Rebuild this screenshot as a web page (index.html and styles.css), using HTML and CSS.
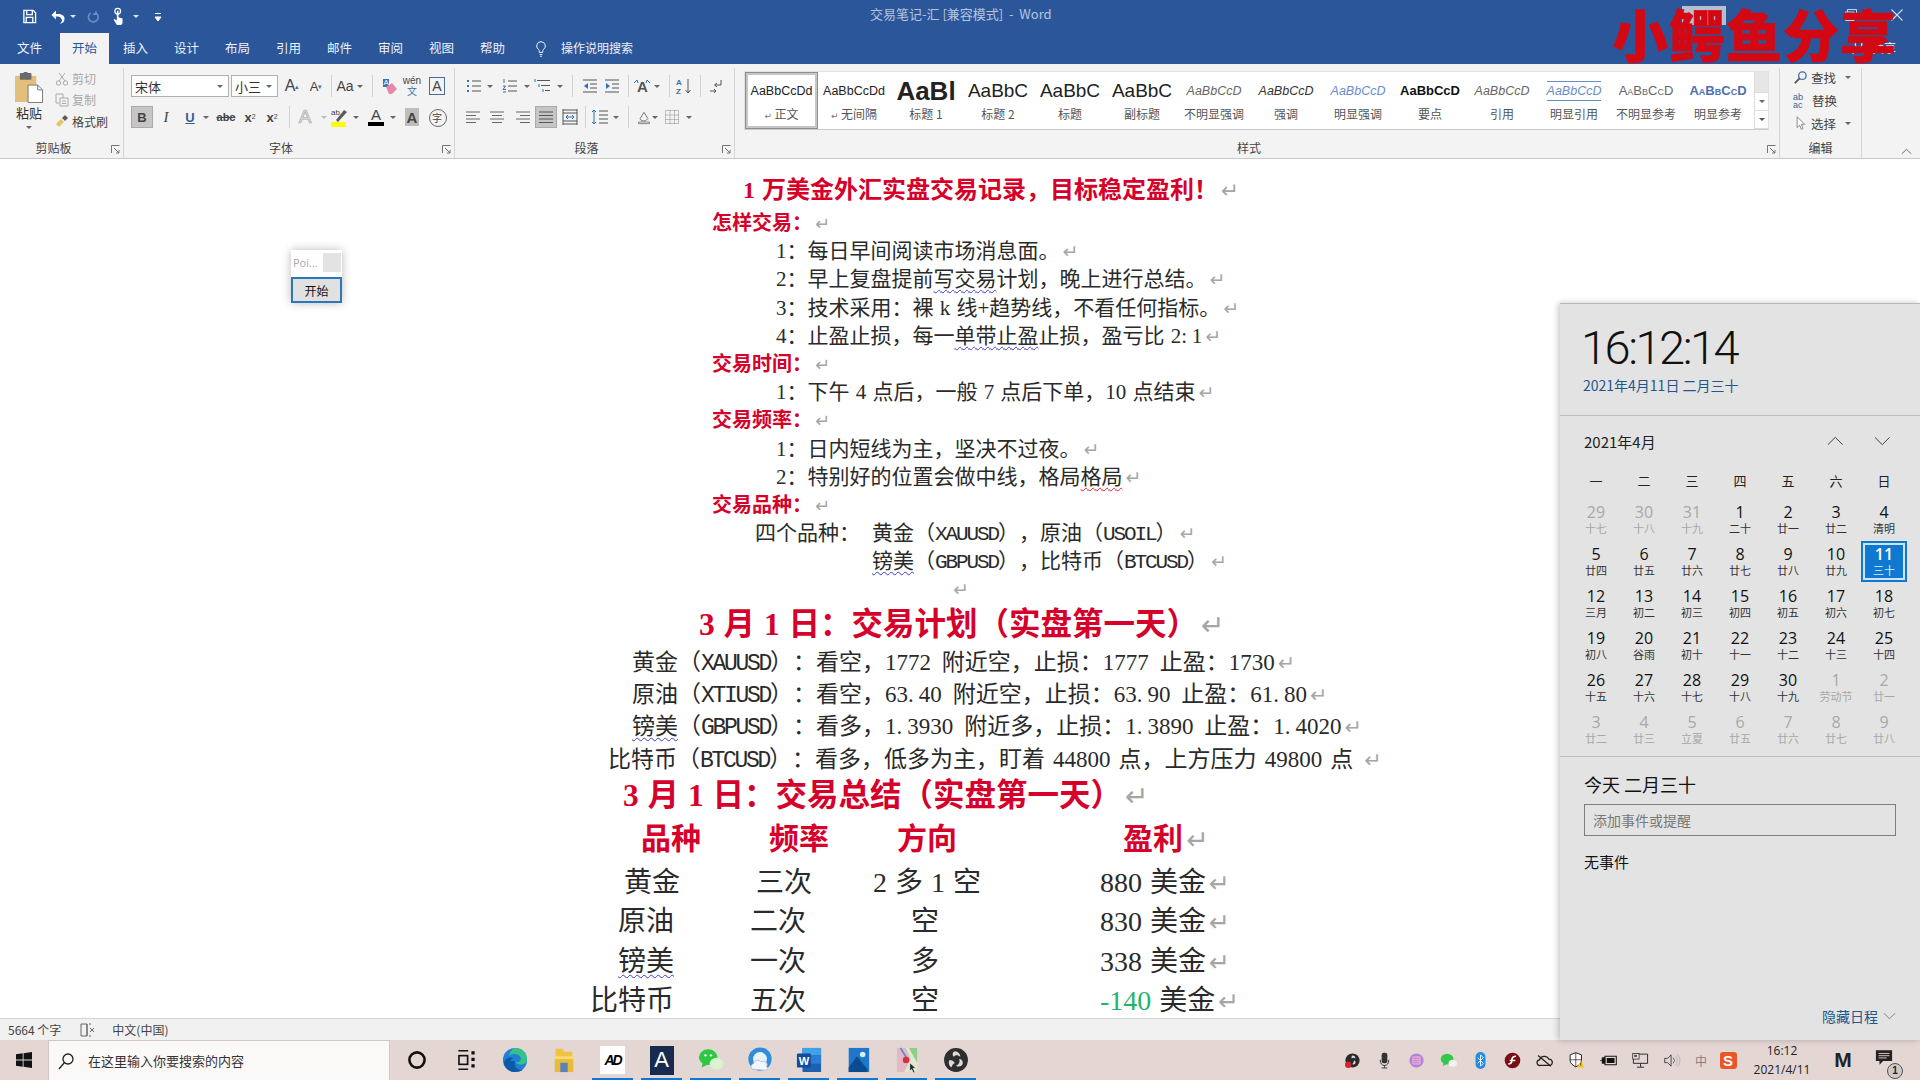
FILE: index.html
```html
<!DOCTYPE html>
<html lang="zh-CN">
<head>
<meta charset="utf-8">
<title>交易笔记-汇 [兼容模式] - Word</title>
<link rel="stylesheet" href="styles.css">
</head>
<body>
<div class="app">
  <header class="titlebar">
    <div class="qat">
      <svg class="q save" viewBox="0 0 16 16"><path d="M2 1.5h10l2.500 2.500v10.500h-12.500zM5 1.500v4.500h6v-4.500M4.500 14.500v-5.500h7v5.500" fill="none" stroke="#fff" stroke-width="1.400"/></svg>
      <svg class="q undo" viewBox="0 0 16 16"><path d="M6 1.500L1.500 6 6 10.500V7.500c3-.5 5 .5 6 3.500 0 2-1 3-2.500 3.500 3.500 0 5-2 5-5 0-3.500-3.500-5-8.500-4.500z" fill="#fff"/></svg>
      <i class="tri q-tri-a"></i>
      <svg class="q redo" viewBox="0 0 16 16"><path d="M11 3a6 6 0 1 1-6.500 0M11 1v3.500H7.500" fill="none" stroke="#6f8dbd" stroke-width="2"/></svg>
      <svg class="q touch" viewBox="0 0 16 22"><circle cx="7" cy="4.500" r="3.500" fill="none" stroke="#fff" stroke-width="1.500"/><path d="M6 4h2v8l5 1.500V19l-1.500 2.500H6L2 15l1-1 3 2z" fill="#fff"/></svg>
      <i class="tri q-tri-b"></i>
      <svg class="q cust" viewBox="0 0 8 12"><path d="M1 2.500h6M1 6h6l-3 4z" fill="#fff" stroke="#fff" stroke-width="1"/></svg>
    </div>
    <div class="doc-name">交易笔记-汇 [兼容模式]  -  Word</div>
    <nav class="tabs">
      <span class="tab first">文件</span><span class="tab on">开始</span><span class="tab">插入</span><span class="tab">设计</span><span class="tab">布局</span><span class="tab">引用</span><span class="tab">邮件</span><span class="tab">审阅</span><span class="tab">视图</span><span class="tab">帮助</span>
      <svg class="bulb" viewBox="0 0 14 20"><path d="M7 1.500a5 5 0 0 0-3 9c.8.700 1 1.500 1 3.500h4c0-2 .2-2.800 1-3.500a5 5 0 0 0-3-9zM5.500 16.500h3M6 18.500h2" fill="none" stroke="#fff" stroke-width="1.100"/></svg>
      <span class="tell">操作说明搜索</span>
    </nav>
    <div class="winbtns">
      <i class="min-ghost"></i>
      <svg class="wc restore" viewBox="0 0 12 12"><path d="M2.500 3V.500h9V8H9M.500 3h8.500v8.500H.500z" fill="none" stroke="#c8d3e6"/></svg>
      <svg class="wc close" viewBox="0 0 12 12"><path d="M.500.500l11 11M11.500.500l-11 11" stroke="#d3dcec" stroke-width="1.100"/></svg>
    </div>
    <div class="share"><svg viewBox="0 0 16 16"><path d="M1 15c1-5 3-6 6-7 3 1 5 2 6 7M7 8a3.500 3.500 0 1 0 0-7 3.500 3.500 0 0 0 0 7z" fill="none" stroke="#fff" stroke-width="1.200"/></svg><span>共享</span></div>
    <div class="mark">小鳄鱼分享</div>
  </header>

  <section class="ribbon">
    <div class="grp g-clip">
      <div class="clip-body">
        <div class="paste">
          <svg class="paste-i" viewBox="0 0 30 32"><rect x="0" y="4" width="22" height="27" fill="#e3bf7c"/><rect x="5" y="1" width="12" height="7" rx="1" fill="#6b6b6b"/><rect x="9" y="0" width="4" height="3" fill="#6b6b6b"/><path d="M13.500 13.500h10l5 5v13h-15z" fill="#fff" stroke="#777"/><path d="M23.500 13.500v5h5" fill="none" stroke="#777"/></svg>
          <span class="paste-t">粘贴</span><i class="tri dk"></i>
        </div>
        <div class="clip-list">
          <div class="cl off"><svg viewBox="0 0 14 14"><path d="M4 1l6 8M10 1L4 9" stroke="#aaa" fill="none"/><circle cx="3.500" cy="11" r="2.200" fill="none" stroke="#aaa"/><circle cx="10.500" cy="11" r="2.200" fill="none" stroke="#aaa"/></svg><span>剪切</span></div>
          <div class="cl off"><svg viewBox="0 0 14 14"><path d="M1 1h7v4M1 1v9h3M5 5h8v8H5zM7 8h4M7 10.500h4" fill="none" stroke="#aaa"/></svg><span>复制</span></div>
          <div class="cl"><svg viewBox="0 0 14 14"><path d="M1 10l5-5 3 3-5 5z" fill="#e6c469"/><path d="M7 4l3-3 3 3-3 3z" fill="#5c5c5c"/></svg><span>格式刷</span></div>
        </div>
      </div>
      <div class="glabel"><span>剪贴板</span><svg class="launch" viewBox="0 0 9 9"><path d="M.500 8V.500H8.500M3 3l5 5M5 8h3V5" fill="none" stroke="#666" stroke-width=".9"/></svg></div>
    </div>

    <div class="grp g-font">
      <div class="rows">
        <div class="row">
          <div class="combo c-name"><span>宋体</span><i class="tri"></i></div>
          <div class="combo c-size"><span>小三</span><i class="tri"></i></div>
          <b class="b w28 glyph">A<sup class="gs">▴</sup></b>
          <b class="b w20 glyph sm">A<sup class="gs">▾</sup></b>
          <b class="b w10"><i class="sep"></i></b>
          <b class="b w18 aa">Aa</b>
          <b class="b w12"><i class="tri"></i></b>
          <b class="b w12"><i class="sep"></i></b>
          <b class="b w22"><svg class="s18" viewBox="0 0 18 18"><path d="M3 2h6v8H3z" fill="#3f6fb5"/><text x="3.500" y="8" class="svt">A</text><path d="M6 10l6-4 5 6-5 5H9z" fill="#e88aa6"/></svg></b>
          <b class="b w24 wen"><span class="wen-t">wén</span><span class="wen-b">文</span></b>
          <b class="b w26"><span class="boxa">A</span></b>
        </div>
        <div class="row r2">
          <b class="b w22 act serif">B</b>
          <b class="b w26 ital">I</b>
          <b class="b w22 und">U</b>
          <b class="b w10"><i class="tri"></i></b>
          <b class="b w30 strike">abc</b>
          <b class="b w18 sub">x<sub>2</sub></b>
          <b class="b w26 sub">x<sup>2</sup></b>
          <b class="b w8"><i class="sep"></i></b>
          <b class="b w24 effect">A</b>
          <b class="b w13"><i class="tri fade"></i></b>
          <b class="b w20"><svg class="s20" viewBox="0 0 20 20"><text x="1" y="8" class="svt2">ab</text><path d="M6 13L14 3l3 2-9 10z" fill="#5b5b5b"/><rect x="1" y="15" width="15" height="5" fill="#ffff00"/></svg></b>
          <b class="b w12"><i class="tri"></i></b>
          <b class="b w28 fontcolor"><span>A</span><i></i></b>
          <b class="b w6"><i class="tri"></i></b>
          <b class="b w32 shade">A</b>
          <b class="b w18 circ">字</b>
        </div>
      </div>
      <div class="glabel"><span>字体</span><svg class="launch" viewBox="0 0 9 9"><path d="M.500 8V.500H8.500M3 3l5 5M5 8h3V5" fill="none" stroke="#666" stroke-width=".9"/></svg></div>
    </div>

    <div class="grp g-para">
      <div class="rows">
        <div class="row">
          <b class="b w20"><svg class="s16" viewBox="0 0 16 16"><path d="M1 3h2M1 8h2M1 13h2" stroke="#2f6fb5" stroke-width="2"/><path d="M6 3h9M6 8h9M6 13h9" stroke="#555"/></svg></b>
          <b class="b w12"><i class="tri"></i></b>
          <b class="b w28"><svg class="s16" viewBox="0 0 16 16"><path d="M2 1v4M1 8h2.500L1 11.500h3M1 14h3" stroke="#2f6fb5" fill="none"/><path d="M6 3h9M6 8h9M6 13h9" stroke="#555"/></svg></b>
          <b class="b w6"><i class="tri"></i></b>
          <b class="b w26"><svg class="s18" viewBox="0 0 18 16"><path d="M1 1v3M5 6v3M9 11v3" stroke="#2f6fb5"/><path d="M3 2.500h13M7 7.500h9M11 12.500h5" stroke="#555"/></svg></b>
          <b class="b w8"><i class="tri"></i></b>
          <b class="b w16"><i class="sep"></i></b>
          <b class="b w20"><svg class="s16" viewBox="0 0 16 16"><path d="M1 2h14M8 6h7M8 10h7M1 14h14" stroke="#555"/><path d="M6 5L2 8l4 3z" fill="#2f6fb5"/></svg></b>
          <b class="b w24"><svg class="s16" viewBox="0 0 16 16"><path d="M1 2h14M8 6h7M8 10h7M1 14h14" stroke="#555"/><path d="M2 5l4 3-4 3z" fill="#2f6fb5"/></svg></b>
          <b class="b w8"><i class="sep"></i></b>
          <b class="b w20"><svg class="s18" viewBox="0 0 18 18"><text x="4" y="15" class="svt4">A</text><path d="M1 6l3-3 1 3M17 6l-3-3-1 3" fill="none" stroke="#2f6fb5"/></svg></b>
          <b class="b w10"><i class="tri"></i></b>
          <b class="b w14"><i class="sep"></i></b>
          <b class="b w16"><svg class="s18" viewBox="0 0 16 18"><text x="0" y="8" class="svt3">A</text><text x="0" y="17" class="svt3">Z</text><path d="M12 2v14M9.500 13l2.500 3 2.500-3" fill="none" stroke="#555"/></svg></b>
          <b class="b w16"><i class="sep"></i></b>
          <b class="b w16"><svg class="s16" viewBox="0 0 16 16"><path d="M13 2v5H7M9 5L6.500 7 9 9M2 13h6M6 11l2 2-2 2" fill="none" stroke="#555"/></svg></b>
        </div>
        <div class="row r2">
          <b class="b w22"><svg class="s16" viewBox="0 0 16 16"><path d="M1 3h14M1 6.500h10M1 10h14M1 13.500h10" stroke="#666"/></svg></b>
          <b class="b w26"><svg class="s16" viewBox="0 0 16 16"><path d="M1 3h14M3 6.500h10M1 10h14M3 13.500h10" stroke="#666"/></svg></b>
          <b class="b w25"><svg class="s16" viewBox="0 0 16 16"><path d="M1 3h14M5 6.500h10M1 10h14M5 13.500h10" stroke="#666"/></svg></b>
          <b class="b w22 act"><svg class="s16" viewBox="0 0 16 16"><path d="M1 3h14M1 6.500h14M1 10h14M1 13.500h14" stroke="#555"/></svg></b>
          <b class="b w26"><svg class="s18" viewBox="0 0 16 18"><path d="M1 2h14M1 16h14M1 13h14M1 5h14" stroke="#555"/><path d="M1 1v16M15 1v16" stroke="#555"/><path d="M4 9h8M4 9l2-2M4 9l2 2M12 9l-2-2M12 9l-2 2" stroke="#2f6fb5" fill="none"/></svg></b>
          <b class="b w4"><i class="sep"></i></b>
          <b class="b w26"><svg class="s18" viewBox="0 0 18 18"><path d="M3 2v14M1 4l2-2 2 2M1 14l2 2 2-2" stroke="#2f6fb5" fill="none"/><path d="M8 3h9M8 7h9M8 11h9M8 15h9" stroke="#555"/></svg></b>
          <b class="b w6"><i class="tri"></i></b>
          <b class="b w18"><i class="sep"></i></b>
          <b class="b w14"><svg class="s18" viewBox="0 0 18 18"><path d="M4 11l5-8 5 8-3 3H6z" fill="none" stroke="#555"/><path d="M2 15.500h14v2H2z" fill="#fff" stroke="#666"/></svg></b>
          <b class="b w8"><i class="tri"></i></b>
          <b class="b w26"><svg class="s16" viewBox="0 0 16 16"><path d="M1.500 1.500h13v13h-13zM1.500 6h13M1.500 10.500h13M6 1.500v13M10.500 1.500v13" fill="none" stroke="#888" stroke-dasharray="1 1"/></svg></b>
          <b class="b w8"><i class="tri"></i></b>
        </div>
      </div>
      <div class="glabel"><span>段落</span><svg class="launch" viewBox="0 0 9 9"><path d="M.500 8V.500H8.500M3 3l5 5M5 8h3V5" fill="none" stroke="#666" stroke-width=".9"/></svg></div>
    </div>

    <div class="grp g-style">
      <div class="gallery">
        <div class="st sel"><em class="s-n">AaBbCcDd</em><span><u>↵</u> 正文</span></div>
        <div class="st"><em class="s-n">AaBbCcDd</em><span><u>↵</u> 无间隔</span></div>
        <div class="st"><em class="s-h1">AaBl</em><span>标题 1</span></div>
        <div class="st"><em class="s-h2">AaBbC</em><span>标题 2</span></div>
        <div class="st"><em class="s-h2">AaBbC</em><span>标题</span></div>
        <div class="st"><em class="s-h2">AaBbC</em><span>副标题</span></div>
        <div class="st"><em class="s-i">AaBbCcD</em><span>不明显强调</span></div>
        <div class="st"><em class="s-i dk2">AaBbCcD</em><span>强调</span></div>
        <div class="st"><em class="s-i blue">AaBbCcD</em><span>明显强调</span></div>
        <div class="st"><em class="s-b">AaBbCcD</em><span>要点</span></div>
        <div class="st"><em class="s-i">AaBbCcD</em><span>引用</span></div>
        <div class="st"><em class="s-i blue lined">AaBbCcD</em><span>明显引用</span></div>
        <div class="st"><em class="s-c">AaBbCcD</em><span>不明显参考</span></div>
        <div class="st"><em class="s-c strong">AaBbCcD</em><span>明显参考</span></div>
        <div class="gscroll"><i class="gs1"></i><i class="gs2"><i class="tri"></i></i><i class="gs3"><i class="tri bar"></i></i></div>
      </div>
      <div class="glabel"><span>样式</span><svg class="launch" viewBox="0 0 9 9"><path d="M.500 8V.500H8.500M3 3l5 5M5 8h3V5" fill="none" stroke="#666" stroke-width=".9"/></svg></div>
    </div>

    <div class="grp g-edit">
      <div class="edit-list">
        <div class="ed"><svg viewBox="0 0 16 16"><circle cx="10" cy="6" r="4" fill="none" stroke="#3f6fa8" stroke-width="1.400"/><path d="M7 9l-5 5" stroke="#555" stroke-width="2"/></svg><span>查找</span><i class="tri"></i></div>
        <div class="ed"><span class="ab">ab<br>ac</span><span>替换</span></div>
        <div class="ed"><svg viewBox="0 0 16 18"><path d="M4 1v13l3-3 2 5 2-1-2-5h4z" fill="#fff" stroke="#777"/></svg><span>选择</span><i class="tri"></i></div>
      </div>
      <div class="glabel ctr"><span>编辑</span></div>
    </div>
    <svg class="collapse" viewBox="0 0 12 7"><path d="M1 6l5-5 5 5" fill="none" stroke="#666"/></svg>
  </section>

  <main class="doc">
    <div class="notes">
      <p class="h-main">1 万美金外汇实盘交易记录，目标稳定盈利！<i class="pm">↵</i></p>
      <p class="ln sec">怎样交易：<i class="pm">↵</i></p>
      <p class="ln it">1：每日早间阅读市场消息面。<i class="pm">↵</i></p>
      <p class="ln it">2：早上复盘提前<span class="wv">写交易</span>计划，晚上进行总结。<i class="pm">↵</i></p>
      <p class="ln it">3：技术采用：裸 k 线+趋势线，不看任何指标。<i class="pm">↵</i></p>
      <p class="ln it">4：止盈止损，每一<span class="wv">单带止盈</span>止损，盈亏比 2<span class="dot">:</span>1<i class="pm">↵</i></p>
      <p class="ln sec">交易时间：<i class="pm">↵</i></p>
      <p class="ln it">1：下午 4 点后，一般 7 点后下单，10 点结束<i class="pm">↵</i></p>
      <p class="ln sec">交易频率：<i class="pm">↵</i></p>
      <p class="ln it">1：日内短线为主，坚决不过夜。<i class="pm">↵</i></p>
      <p class="ln it">2：特别好的位置会做中线，格局<span class="wr">格局</span><i class="pm">↵</i></p>
      <p class="ln sec">交易品种：<i class="pm">↵</i></p>
      <p class="ln kinds"><span class="kl">四个品种：</span><span>黄金（<span class="m">XAUUSD</span>），原油（<span class="m">USOIL</span>）<i class="pm">↵</i></span></p>
      <p class="ln kinds"><span class="kl"></span><span><span class="wv">镑美</span>（<span class="m">GBPUSD</span>），比特币（<span class="m">BTCUSD</span>）<i class="pm">↵</i></span></p>
      <p class="ln solo"><i class="pm">↵</i></p>
    </div>
    <h2 class="h-plan">3 月 1 日：交易计划（实盘第一天）<i class="pm">↵</i></h2>
    <div class="plan">
      <p class="pl p1">黄金（<span class="m">XAUUSD</span>）：看空，1772 附近空，止损：1777 止盈：1730<i class="pm">↵</i></p>
      <p class="pl p1">原油（<span class="m">XTIUSD</span>）：看空，63<span class="dot">.</span>40 附近空，止损：63<span class="dot">.</span>90 止盈：61<span class="dot">.</span>80<i class="pm">↵</i></p>
      <p class="pl p1"><span class="wv">镑美</span>（<span class="m">GBPUSD</span>）：看多，1<span class="dot">.</span>3930 附近多，止损：1<span class="dot">.</span>3890 止盈：1<span class="dot">.</span>4020<i class="pm">↵</i></p>
      <p class="pl p2">比特币（<span class="m">BTCUSD</span>）：看多，低多为主，盯着 44800 点，上方压力 49800 点 <i class="pm">↵</i></p>
    </div>
    <h2 class="h-sum">3 月 1 日：交易总结（实盘第一天）<i class="pm">↵</i></h2>
    <div class="tb">
      <div class="thead"><span>品种</span><span>频率</span><span>方向</span><span>盈利<i class="pm">↵</i></span></div>
      <div class="tr ta"><span>黄金</span><span>三次</span><span>2 多 1 空</span><span>880 美金<i class="pm">↵</i></span></div>
      <div class="tr tb2"><span>原油</span><span>二次</span><span>空</span><span>830 美金<i class="pm">↵</i></span></div>
      <div class="tr tb2"><span class="wv">镑美</span><span>一次</span><span>多</span><span>338 美金<i class="pm">↵</i></span></div>
      <div class="tr tc"><span>比特币</span><span>五次</span><span>空</span><span><span class="loss">-140</span> 美金<i class="pm">↵</i></span></div>
    </div>
  </main>

  <footer class="status"><span>5664 个字</span>
    <svg class="proof" viewBox="0 0 16 14"><path d="M1 1h6v12H1zM7 1v12M9 1h2M9 13h2" fill="none" stroke="#666"/><path d="M10 5l4 4M14 5l-4 4" stroke="#666"/></svg>
    <span>中文(中国)</span>
  </footer>

  <div class="taskbar">
    <div class="start"><svg viewBox="0 0 18 18"><path d="M0 2.500l7.500-1v7H0zM8.500 1.300L18 0v8.500H8.500zM0 9.500h7.500v7L0 15.500zM8.500 9.500H18V18l-9.500-1.300z" fill="#111"/></svg></div>
    <div class="search"><svg viewBox="0 0 18 18"><circle cx="11" cy="7" r="5" fill="none" stroke="#222" stroke-width="1.300"/><path d="M7.500 10.500L2 17" stroke="#222" stroke-width="1.300"/></svg><span>在这里输入你要搜索的内容</span></div>
    <div class="tk"><svg viewBox="0 0 24 24"><circle cx="12" cy="12" r="7" fill="none" stroke="#111" stroke-width="2.400"/></svg></div>
    <div class="tk"><svg viewBox="0 0 24 24"><path d="M5 3.500h9M5 20.500h9" stroke="#111" stroke-width="1.500"/><rect x="5.500" y="8" width="8" height="8" fill="none" stroke="#111" stroke-width="1.500"/><path d="M17 4h3v3h-3zM17 10h3v3h-3zM17 16h3v3h-3z" fill="#111"/></svg></div>
    <div class="tk"><svg viewBox="0 0 28 28"><circle cx="14" cy="14" r="13" fill="#1f7fd3"/><path d="M14 1c8 0 13 5 13 12 0 4-3 6-7 6-3 0-5-1-5-3 5 1 6-3 5-5-2-4-9-5-13-1 2-5 4-9 7-9z" fill="#35c28a"/><path d="M14 15c-2 6 3 11 9 9-2 2-5 3-9 3-6 0-11-4-12-10 1-4 6-7 10-5-2 1-3 2-3 3z" fill="#0c59a8"/></svg></div>
    <div class="tk"><svg viewBox="0 0 24 28"><path d="M3 2h7l2 3h9v6H3z" fill="#f0c340"/><path d="M2 10h20v4H2z" fill="#f7da72"/><path d="M2 13h20v14H2z" fill="#e9bb3b"/><rect x="8" y="17" width="8" height="10" fill="#5a84b8"/></svg></div>
    <div class="tk uline"><span class="ad">AD</span></div>
    <div class="tk uline"><span class="navy">A</span></div>
    <div class="tk uline"><svg viewBox="0 0 28 26"><ellipse cx="11" cy="10" rx="10" ry="8.500" fill="#2dc83f"/><path d="M5 16l-1 5 6-3z" fill="#2dc83f"/><ellipse cx="20" cy="17" rx="7.500" ry="6.500" fill="#d9f2d0"/><circle cx="8" cy="8" r="1.300" fill="#fff"/><circle cx="14" cy="8" r="1.300" fill="#fff"/></svg></div>
    <div class="tk uline"><svg viewBox="0 0 28 28"><circle cx="14" cy="13" r="12.500" fill="#2f8ddc"/><circle cx="14" cy="13" r="7.500" fill="#e7f2fb"/><path d="M7 24c-3 0-4-5 0-6 1-4 6-5 8-2 5-2 8 2 6 5 3 2 0 4-2 4z" fill="#f3f5f7" stroke="#a9c6de"/></svg></div>
    <div class="tk uline"><svg viewBox="0 0 28 28"><rect x="7" y="1" width="20" height="26" rx="1" fill="#1d5fb0"/><path d="M7 1h20v8H7z" fill="#41a1e6"/><path d="M7 9h20v9H7z" fill="#2b7cd3"/><rect x="1" y="7" width="15" height="15" rx="1" fill="#134a9b"/><text x="3" y="19" class="svw">W</text></svg></div>
    <div class="tk uline"><svg viewBox="0 0 24 28"><rect x="2" y="1" width="22" height="26" fill="#1f77c9"/><circle cx="17" cy="8" r="3" fill="#d6ecfb"/><path d="M2 22L11 10l11 14v3H2z" fill="#0a4c8f"/></svg></div>
    <div class="tk uline"><svg viewBox="0 0 24 28"><rect x="1" y="1" width="22" height="26" fill="#dfe9d2"/><path d="M1 1h10l5 12-7 14H1z" fill="#e2b9c4"/><path d="M14 1h9v16z" fill="#8fce86"/><path d="M5 1l8 13" stroke="#5c8fd1" stroke-width="2"/><circle cx="11" cy="14" r="3.500" fill="#d82e3d"/><path d="M15 17v9l2-2 2 4 1.500-1-2-4h3z" fill="#222" stroke="#fff" stroke-width=".6"/></svg></div>
    <div class="tk uline"><svg viewBox="0 0 24 24"><circle cx="12" cy="12" r="11" fill="#2e2e2e"/><path d="M11 4a5 5 0 0 1 5 5c-2-2-5-2-6 0-2-1-1-5 1-5zM6 12a5 5 0 0 0 2 7c0-2 2-4 3-4-1-2-3-3-5-3zM15 11c2 0 4 2 3 5-1 2-4 3-6 1 2 0 4-3 3-6z" fill="#dcdcdc"/></svg></div>
    <div class="tray">
      <div class="ti"><svg viewBox="0 0 24 24"><circle cx="12" cy="12" r="10" fill="#2a2a2a"/><path d="M12 5a4 4 0 0 1 4 4c-2-1-4-1-5 0-1-1 0-4 1-4zM14 12c2 0 3 2 2 4s-3 2-5 1c2 0 3-3 3-5z" fill="#ddd"/><circle cx="6" cy="18" r="4.500" fill="#d8202f"/></svg></div>
      <div class="ti"><svg viewBox="0 0 16 24"><rect x="4" y="1" width="8" height="15" rx="3" fill="#333"/><path d="M2 11c0 5 2 8 6 8s6-3 6-8M8 19v3M4 22.500h8" fill="none" stroke="#333" stroke-width="1.300"/></svg></div>
      <div class="ti"><svg viewBox="0 0 24 24"><circle cx="12" cy="12" r="10" fill="#b183e0"/><rect x="6" y="6" width="12" height="12" rx="2" fill="#e6a7d2"/><path d="M8 9h8M8 12h8M8 15h8" stroke="#7a5ac2" stroke-dasharray="1 1"/></svg></div>
      <div class="ti"><svg viewBox="0 0 24 22"><ellipse cx="10" cy="9" rx="9" ry="7.500" fill="#31c94a"/><path d="M5 14l-1 5 5-3z" fill="#31c94a"/><ellipse cx="18" cy="15" rx="6" ry="5" fill="#f0f2ee"/></svg></div>
      <div class="ti"><svg viewBox="0 0 16 24"><rect x="1" y="0" width="14" height="24" rx="7" fill="#1e8de8"/><path d="M4 8l8 8-4 4V4l4 4-8 8" fill="none" stroke="#fff" stroke-width="1.300"/></svg></div>
      <div class="ti"><svg viewBox="0 0 24 24"><circle cx="12" cy="12" r="11" fill="#7a0c14"/><path d="M17 6c-5 0-6 3-6 6s-1 5-5 5M8 12h8" fill="none" stroke="#fff" stroke-width="2.300"/></svg></div>
      <div class="ti"><svg viewBox="0 0 24 20"><path d="M6 17a4 4 0 0 1-1-8 7 7 0 0 1 13-1 4.500 4.500 0 0 1 1 9z" fill="none" stroke="#222" stroke-width="1.800"/><path d="M3 3l18 15" stroke="#222" stroke-width="1.800"/></svg></div>
      <div class="ti"><svg viewBox="0 0 22 24"><path d="M10 1l8 3v8c0 4-4 7-8 9-4-2-8-5-8-9V4z" fill="#fff" stroke="#222" stroke-width="1.400"/><path d="M10 1v20M2 11h16" stroke="#222"/><path d="M17 12l5 10H12z" fill="#f5c518"/><path d="M17 15v4" stroke="#222"/></svg></div>
      <div class="ti"><svg viewBox="0 0 24 20"><rect x="7" y="4" width="16" height="12" fill="none" stroke="#111" stroke-width="1.400"/><rect x="9.500" y="6.500" width="11" height="7" fill="#111"/><path d="M0 10h4M3 6h4v8H3z" fill="#111" stroke="#111"/></svg></div>
      <div class="ti"><svg viewBox="0 0 24 24"><path d="M2 3h20v13H2zM12 16v5M7 21.500h10" fill="none" stroke="#222" stroke-width="1.300"/><rect x="1" y="2" width="9" height="8" fill="#e6dada" stroke="#222"/><rect x="3" y="4" width="4" height="3" fill="#555"/></svg></div>
      <div class="ti"><svg viewBox="0 0 24 22"><path d="M1 8h4l5-5v16l-5-5H1z" fill="none" stroke="#333" stroke-width="1.200"/><path d="M13 7a6 6 0 0 1 0 8" fill="none" stroke="#333"/><path d="M16 4a10 10 0 0 1 0 14M19 2a13 13 0 0 1 0 18" fill="none" stroke="#aaa"/></svg></div>
      <div class="ti w26"><span class="zh">中</span></div>
      <div class="ti w28"><span class="sg">S</span></div>
      <div class="clock"><span>16:12</span><span>2021/4/11</span></div>
      <div class="ti w42"><span class="mm">M</span></div>
      <div class="ti w46 notif"><svg viewBox="0 0 20 18"><path d="M1 1h18v12H9l-4 4v-4H1z" fill="#222"/><path d="M4 4.500h12M4 7h12M4 9.500h9" stroke="#e3d6d2"/></svg><b class="badge">1</b></div>
    </div>
  </div>

  <aside class="poi">
    <div class="poi-top"><span>Poi...</span><i></i></div>
    <div class="poi-btn">开始</div>
  </aside>

  <aside class="cal">
    <div class="cal-top">
      <div class="time">16:12:14</div>
      <div class="date">2021年4月11日 二月三十</div>
    </div>
    <div class="cal-mid">
      <div class="month"><span>2021年4月</span>
        <svg viewBox="0 0 18 10"><path d="M1 9l8-8 8 8" fill="none" stroke="#333"/></svg>
        <svg viewBox="0 0 18 10"><path d="M1 1l8 8 8-8" fill="none" stroke="#333"/></svg>
      </div>
      <div class="days wk"><span>一</span><span>二</span><span>三</span><span>四</span><span>五</span><span>六</span><span>日</span></div>
      <div class="days gridd">
        <div class="d out"><b>29</b><i>十七</i></div><div class="d out"><b>30</b><i>十八</i></div><div class="d out"><b>31</b><i>十九</i></div><div class="d"><b>1</b><i>二十</i></div><div class="d"><b>2</b><i>廿一</i></div><div class="d"><b>3</b><i>廿二</i></div><div class="d"><b>4</b><i>清明</i></div>
        <div class="d"><b>5</b><i>廿四</i></div><div class="d"><b>6</b><i>廿五</i></div><div class="d"><b>7</b><i>廿六</i></div><div class="d"><b>8</b><i>廿七</i></div><div class="d"><b>9</b><i>廿八</i></div><div class="d"><b>10</b><i>廿九</i></div><div class="d today"><b>11</b><i>三十</i></div>
        <div class="d"><b>12</b><i>三月</i></div><div class="d"><b>13</b><i>初二</i></div><div class="d"><b>14</b><i>初三</i></div><div class="d"><b>15</b><i>初四</i></div><div class="d"><b>16</b><i>初五</i></div><div class="d"><b>17</b><i>初六</i></div><div class="d"><b>18</b><i>初七</i></div>
        <div class="d"><b>19</b><i>初八</i></div><div class="d"><b>20</b><i>谷雨</i></div><div class="d"><b>21</b><i>初十</i></div><div class="d"><b>22</b><i>十一</i></div><div class="d"><b>23</b><i>十二</i></div><div class="d"><b>24</b><i>十三</i></div><div class="d"><b>25</b><i>十四</i></div>
        <div class="d"><b>26</b><i>十五</i></div><div class="d"><b>27</b><i>十六</i></div><div class="d"><b>28</b><i>十七</i></div><div class="d"><b>29</b><i>十八</i></div><div class="d"><b>30</b><i>十九</i></div><div class="d out"><b>1</b><i>劳动节</i></div><div class="d out"><b>2</b><i>廿一</i></div>
        <div class="d out"><b>3</b><i>廿二</i></div><div class="d out"><b>4</b><i>廿三</i></div><div class="d out"><b>5</b><i>立夏</i></div><div class="d out"><b>6</b><i>廿五</i></div><div class="d out"><b>7</b><i>廿六</i></div><div class="d out"><b>8</b><i>廿七</i></div><div class="d out"><b>9</b><i>廿八</i></div>
      </div>
    </div>
    <div class="cal-bot">
      <div class="today-t">今天 二月三十</div>
      <div class="ev-in">添加事件或提醒</div>
      <div class="noev">无事件</div>
      <div class="hide"><span>隐藏日程</span><svg viewBox="0 0 14 8"><path d="M1 1l6 6 6-6" fill="none" stroke="#777"/></svg></div>
    </div>
  </aside>
</div>
</body>
</html>
```

FILE: styles.css
```css
* { box-sizing: border-box; }
html, body { margin: 0; padding: 0; height: 100%; overflow: hidden; background: #fff; }
p, h2 { margin: 0; font-weight: normal; }
i, em, b, u { font-style: normal; text-decoration: none; }
body { font-family: "Noto Sans CJK SC", "Liberation Sans", sans-serif; color: #333; }
.app { position: relative; width: 1920px; height: 1080px; display: flex; flex-direction: column; overflow: hidden; }

/* title bar */
.titlebar { position: relative; flex: 0 0 64px; background: #2b579a; color: #fff; }
.qat { display: flex; align-items: center; height: 33px; padding-left: 22px; }
.q { display: block; }
.save { width: 15px; height: 15px; }
.undo { width: 16px; height: 16px; margin-left: 13px; }
.tri { display: inline-block; width: 0; height: 0; border: 3px solid transparent; border-top: 3px solid #666; border-bottom: 0; }
.q-tri-a, .q-tri-b { border-top-color: #dfe6f2; margin-left: 4px; }
.redo { width: 13px; height: 14px; margin-left: 11px; }
.touch { width: 13px; height: 19px; margin-left: 12px; }
.q-tri-b { margin-left: 8px; }
.cust { width: 8px; height: 12px; margin-left: 15px; }
.doc-name { position: absolute; left: 870px; top: 5px; font-size: 13px; line-height: 18px; color: #b6c5de; white-space: pre; }
.tabs { display: flex; align-items: stretch; height: 31px; padding-left: 4px; font-size: 12.500px; }
.tab { flex: 0 0 51px; display: flex; align-items: center; justify-content: center; color: #eef2f8; padding-bottom: 2px; }
.tab.first { margin-right: 4px; }
.tab.on { background: #f3f3f3; color: #2b579a; margin: 0 1px; flex-basis: 49px; }
.bulb { width: 12px; height: 18px; align-self: center; margin-left: 17px; }
.tell { align-self: center; margin-left: 14px; font-size: 12px; color: #eef2f8; padding-bottom: 2px; }
.min-ghost { position: absolute; left: 1682px; top: 6px; width: 44px; height: 19px; background: #b4bfd0; }
.wc { position: absolute; top: 9px; width: 12px; height: 12px; }
.restore { left: 1845px; }
.close { left: 1891px; }
.share { position: absolute; left: 1852px; top: 39px; display: flex; align-items: center; gap: 5px; font-size: 12px; color: #fff; }
.share svg { width: 15px; height: 15px; }
.mark { position: absolute; left: 1612px; top: 3px; font-size: 56px; line-height: 60px; font-weight: 900; color: #d40813; white-space: nowrap; letter-spacing: 1px; -webkit-text-stroke: .6px #d40813; }

/* ribbon */
.ribbon { position: relative; flex: 0 0 95px; display: flex; background: #f3f3f3; border-bottom: 1px solid #c9c9c9; font-size: 12px; color: #444; }
.grp { display: flex; flex-direction: column; border-right: 1px solid #d6d6d6; height: 90px; margin-top: 4px; }
.g-clip { width: 124px; }
.g-font { width: 331px; }
.g-para { width: 280px; }
.g-style { width: 1045px; }
.g-edit { width: 82px; }
.glabel { position: relative; margin-top: auto; height: 20px; line-height: 20px; text-align: center; padding-right: 16px; }
.glabel.ctr { padding-right: 0; }
.launch { position: absolute; right: 3px; top: 7px; width: 9px; height: 9px; }
.clip-body { display: flex; height: 64px; }
.paste { flex: 0 0 55px; display: flex; flex-direction: column; align-items: center; padding: 4px 0 0 3px; }
.paste-i { width: 29px; height: 31px; }
.paste-t { font-size: 13px; line-height: 16px; margin-top: 2px; color: #333; }
.paste .dk { margin-top: 5px; }
.clip-list { display: flex; flex-direction: column; }
.cl { display: flex; align-items: center; gap: 3px; height: 23px; font-size: 12px; color: #444; }
.cl.off { color: #a8a8a8; }
.cl svg { width: 14px; height: 14px; }
.rows { padding-top: 7px; display: flex; flex-direction: column; gap: 9px; height: 64px; }
.row { display: flex; align-items: center; height: 22px; }
.g-font .rows { padding-left: 7px; }
.g-para .rows { padding-left: 9px; }
.g-para .r2 { margin-left: -2px; }
.combo { display: flex; align-items: center; justify-content: space-between; height: 22px; background: #fff; border: 1px solid #b0b0b0; padding: 0 5px 0 3px; font-size: 13px; color: #333; }
.c-name { width: 98px; margin-right: 2px; }
.c-size { width: 47px; }
.b { display: flex; align-items: center; justify-content: center; height: 22px; font-weight: normal; flex: none; position: relative; color: #444; }
.w4 { width: 4px; } .w6 { width: 6px; } .w8 { width: 8px; } .w10 { width: 10px; } .w12 { width: 12px; } .w13 { width: 13px; } .w14 { width: 14px; } .w16 { width: 16px; } .w18 { width: 18px; } .w20 { width: 20px; } .w22 { width: 22px; } .w24 { width: 24px; } .w25 { width: 25px; } .w26 { width: 26px; } .w28 { width: 28px; } .w30 { width: 30px; } .w32 { width: 32px; }
.sep { display: block; width: 1px; height: 22px; background: #d2d2d2; }
.s16 { width: 16px; height: 16px; }
.s18 { width: 18px; height: 18px; }
.s20 { width: 20px; height: 20px; }
.glyph { font-family: "Liberation Sans", sans-serif; font-size: 16px; }
.glyph.sm { font-size: 13px; }
.gs { font-size: 7px; line-height: 1; color: #3f6fa8; vertical-align: 8px; }
.aa { font-family: "Liberation Sans", sans-serif; font-size: 14px; }
.wen { flex-direction: column; line-height: 10px; font-size: 10px; color: #444; }
.wen-t { font-family: "Liberation Sans", sans-serif; font-size: 10px; }
.wen-b { color: #3f6fa8; font-size: 10px; }
.boxa { display: flex; align-items: center; justify-content: center; width: 16px; height: 18px; border: 1px solid #4a6d9c; font-family: "Liberation Sans", sans-serif; font-size: 14px; }
.act { background: #c6c6c6; border: 1px solid #ababab; }
.serif { font-family: "Liberation Sans", sans-serif; font-weight: bold; font-size: 13px; }
.ital { font-family: "Liberation Serif", serif; font-style: italic; font-size: 15px; }
.und { font-family: "Liberation Sans", sans-serif; font-size: 13px; font-weight: bold; text-decoration: underline; color: #3a5f94; }
.strike { font-family: "Liberation Sans", sans-serif; font-size: 11px; text-decoration: line-through; font-weight: bold; }
.sub { font-family: "Liberation Sans", sans-serif; font-size: 13px; font-weight: bold; }
.sub sub, .sub sup { font-size: 7px; line-height: 0; font-weight: normal; }
.effect { font-family: "Liberation Sans", sans-serif; font-size: 19px; color: #e6e6e6; -webkit-text-stroke: .7px #aaa; }
.fade { border-top-color: #bbb; }
.svt { font: 8px "Liberation Sans", sans-serif; fill: #fff; }
.svt2 { font: 8px "Liberation Sans", sans-serif; fill: #444; }
.svt3 { font: bold 8px "Liberation Sans", sans-serif; fill: #3f6fa8; }
.svt4 { font: bold 15px "Liberation Sans", sans-serif; fill: #555; }
.svw { font: bold 12px "Liberation Sans", sans-serif; fill: #fff; }
.fontcolor { flex-direction: column; font-family: "Liberation Sans", sans-serif; font-size: 15px; line-height: 14px; }
.fontcolor i { display: block; width: 16px; height: 4px; background: #000; }
.shade { font-family: "Liberation Sans", sans-serif; font-size: 15px; font-weight: bold; background: linear-gradient(#bdbdbd, #bdbdbd) center / 14px 18px no-repeat; }
.circ { font-size: 10px; }
.circ::before { content: ""; position: absolute; left: 1px; top: 3px; width: 16px; height: 16px; border: 1px solid #666; border-radius: 50%; }

.gallery { position: relative; display: flex; width: 1025px; height: 59px; margin: 3px 0 0 9px; background: #fff; border: 1px solid #e2e2e2; border-bottom-color: #c9c9c9; }
.st { flex: 0 0 72px; width: 72px; display: flex; flex-direction: column; align-items: center; padding-top: 7px; }
.st em { display: block; height: 24px; line-height: 24px; white-space: nowrap; font-family: "Liberation Sans", sans-serif; color: #222; text-align: center; }
.st span { line-height: 20px; font-size: 12px; color: #555; margin-top: 1px; white-space: nowrap; }
.st span u { font-size: 9px; color: #777; font-family: "DejaVu Sans", sans-serif; }
.st.sel { flex-basis: 73px; border: 3px solid #c6c6c6; outline: 1px solid #8e8e8e; outline-offset: -1px; padding-top: 4px; }
.s-n { font-size: 12.500px; }
.s-h1 { font-size: 26px; font-weight: bold; }
.s-h2 { font-size: 19px; }
.s-i { font-size: 12.500px; font-style: italic; color: #666 !important; }
.dk2 { color: #333 !important; }
.blue { color: #6a8ccb !important; }
.lined { border-top: 1px solid #6a8ccb; border-bottom: 1px solid #6a8ccb; line-height: 18px !important; height: 20px !important; margin: 2px 0; }
.s-b { font-size: 13px; font-weight: bold; color: #111 !important; }
.s-c { font-size: 13px; font-variant: small-caps; color: #666 !important; }
.strong { color: #4f6fb0 !important; font-weight: bold; }
.gscroll { position: absolute; right: 0; top: 0; bottom: 0; width: 14px; display: flex; flex-direction: column; border-left: 1px solid #dcdcdc; }
.gscroll > i { display: flex; align-items: center; justify-content: center; border-bottom: 1px solid #dcdcdc; }
.gs1 { flex: 0 0 21px; background: #e6e6e6; }
.gs2 { flex: 0 0 18px; }
.gs3 { flex: 1; }
.bar { border-top-color: #555; }
.edit-list { height: 64px; padding: 0 0 0 13px; margin-top: -2px; }
.ed { display: flex; align-items: center; height: 23px; font-size: 12.500px; color: #444; gap: 3px; }
.ed svg { width: 15px; height: 15px; }
.ed .tri { margin-left: 6px; }
.ab { width: 16px; font: 9px/8px "Liberation Sans", sans-serif; color: #3a5f94; }
.collapse { position: absolute; right: 8px; bottom: 3px; width: 11px; height: 7px; }

/* document */
.doc { flex: 1; min-height: 0; overflow: hidden; background: #fff; font-family: "Liberation Serif", "Noto Sans CJK SC", serif; color: #2a2a2a; white-space: nowrap; padding-top: 15px; word-spacing: .06em; text-spacing-trim: space-all; }
.pm { font-family: "DejaVu Sans", sans-serif; font-weight: normal; color: #a6a6a6; font-size: .9em; margin-left: 3px; }
.m { font-family: "Liberation Mono", monospace; letter-spacing: -.1em; }
.dot { letter-spacing: .22em; }
.notes { padding-left: 712px; font-size: 21px; }
.h-main { padding-left: 31px; font-size: 24px; line-height: 32px; font-weight: bold; color: #d6002a; margin-bottom: 2px; }
.ln { line-height: 28.200px; height: 28.200px; }
.sec { font-weight: bold; color: #d6002a; font-size: 20px; }
.it { padding-left: 64px; }
.kinds { padding-left: 43px; display: flex; }
.kl { flex: 0 0 117px; }
.solo { padding-left: 238px; }
.wv { text-decoration: underline wavy #3b3bd8 1px; text-underline-offset: 3px; }
.wr { text-decoration: underline wavy #e0202a 1px; text-underline-offset: 3px; }
.h-plan, .h-sum { font-weight: bold; color: #d6002a; font-size: 31.500px; }
.h-plan { line-height: 40px; padding-left: 699px; margin: 1px 0; }
.h-sum { line-height: 40px; padding-left: 623px; }
.pl { line-height: 32.300px; height: 32.300px; font-size: 23px; word-spacing: .22em; }
.p1 { padding-left: 632px; }
.p2 { padding-left: 608px; word-spacing: .1em; }
.thead, .tr { display: grid; }
.thead { height: 42px; line-height: 42px; margin: 1px 0 3px; padding-left: 641px; grid-template-columns: 128px 128px 226px 1fr; font-size: 30px; font-weight: bold; color: #d6002a; }
.tr { height: 39.400px; line-height: 39.400px; font-size: 28px; }
.ta { padding-left: 624px; grid-template-columns: 132px 117px 227px 1fr; }
.tb2 { padding-left: 618px; grid-template-columns: 132px 161px 189px 1fr; }
.tc { height: 36px; padding-left: 590px; grid-template-columns: 160px 161px 189px 1fr; }
.loss { color: #1fb56b; }

/* status bar */
.status { flex: 0 0 22px; display: flex; align-items: center; padding-left: 8px; background: #f1f1f1; border-top: 1px solid #d4d4d4; font-size: 12px; color: #444; }
.proof { width: 16px; height: 14px; margin: 0 16px 0 19px; }

/* taskbar */
.taskbar { flex: 0 0 40px; display: flex; align-items: center; background: #e3d6d3; color: #111; }
.start { flex: 0 0 48px; display: flex; justify-content: center; }
.start svg { width: 16px; height: 16px; }
.search { flex: 0 0 342px; display: flex; align-items: center; align-self: stretch; padding-left: 8px; background: #fbf8f8; border: 1px solid #cfc6c5; border-bottom: 0; gap: 13px; font-size: 13px; color: #333; }
.search svg { width: 18px; height: 18px; }
.tk { position: relative; flex: 0 0 49px; display: flex; align-items: center; justify-content: center; height: 40px; }
.search + .tk { margin-left: 2px; }
.tk svg { width: 26px; height: 26px; }
.uline::after { content: ""; position: absolute; left: 4px; right: 4px; bottom: 0; height: 2px; background: #0f78d4; }
.ad { display: flex; align-items: center; justify-content: center; width: 25px; height: 28px; background: #fff; color: #000; font: italic bold 14px "Liberation Sans", sans-serif; letter-spacing: -2px; }
.navy { display: flex; align-items: center; justify-content: center; width: 24px; height: 29px; background: #172b4f; color: #fff; font: 22px "Liberation Sans", sans-serif; }
.tray { margin-left: auto; display: flex; align-items: center; height: 40px; padding-right: 10px; }
.ti { flex: 0 0 32px; position: relative; display: flex; align-items: center; justify-content: center; }
.ti svg { width: 17px; height: 17px; }
.ti.w26 { flex-basis: 26px; }
.ti.w28 { flex-basis: 28px; }
.ti.w42 { flex-basis: 42px; }
.ti.w46 { flex-basis: 46px; }
.zh { display: flex; align-items: center; justify-content: center; width: 15px; height: 15px; font-size: 12px; color: #8a8080; }
.sg { display: flex; align-items: center; justify-content: center; width: 17px; height: 17px; background: #e8562a; color: #fff; font: bold 15px "Liberation Sans", sans-serif; border-radius: 3px; }
.clock { flex: 0 0 80px; display: flex; flex-direction: column; align-items: center; font-size: 12px; line-height: 19px; color: #222; font-family: "Open Sans", sans-serif; }
.mm { font: bold 21px "Liberation Sans", sans-serif; color: #222; }
.notif svg { width: 18px; height: 17px; margin-top: -6px; margin-left: -6px; }
.badge { position: absolute; left: 23px; top: 8px; width: 16px; height: 16px; border-radius: 50%; background: #cfc8c8; border: 1px solid #555; color: #222; font: bold 10px/14px "Liberation Sans", sans-serif; text-align: center; }

/* floating Poi window */
.poi { position: absolute; left: 291px; top: 250px; width: 51px; height: 53px; background: #fff; box-shadow: 0 0 9px rgba(0,0,0,.28); display: flex; flex-direction: column; }
.poi-top { flex: 0 0 27px; display: flex; align-items: center; justify-content: space-between; padding: 0 1px 3px 2px; font: 11px "Open Sans", sans-serif; color: #a6a6a6; }
.poi-top i { display: block; width: 18px; height: 19px; background: #e3e3e3; }
.poi-btn { flex: 1; display: flex; align-items: center; justify-content: center; background: #e1e1e1; border: 2px solid #2a78b8; font-size: 12px; color: #111; }

/* calendar flyout */
.cal { position: absolute; left: 1560px; top: 303px; width: 360px; height: 737px; display: flex; flex-direction: column; background: #e3e3e3; border-top: 1px solid #b8b8b8; box-shadow: -2px 0 6px rgba(0,0,0,.22); color: #1a1a1a; }
.cal-top { flex: 0 0 112px; padding: 16px 0 0 23px; border-bottom: 1px solid #bdbdbd; }
.time { margin-left: -2px; font: 300 47px/55px Roboto, sans-serif; letter-spacing: -2.500px; color: #111; }
.date { font-size: 14px; line-height: 20px; color: #23568c; }
.cal-mid { flex: 0 0 341px; border-bottom: 1px solid #bdbdbd; }
.month { display: flex; align-items: center; height: 50px; padding-left: 24px; font-size: 15px; color: #222; }
.month span { flex: 0 0 243px; }
.month svg { width: 18px; height: 10px; margin-right: 30px; }
.days { display: grid; grid-template-columns: repeat(7, 48px); margin-left: 12px; }
.wk { height: 28px; line-height: 29px; text-align: center; font-size: 13px; color: #222; }
.gridd { margin-top: 5px; grid-auto-rows: 42px; }
.d { display: flex; flex-direction: column; align-items: center; padding-top: 4px; position: relative; }
.d b { font: 16px/18px "Open Sans", sans-serif; color: #111; }
.d i { font-size: 11px; line-height: 14px; color: #333; white-space: nowrap; }
.d.out b, .d.out i { color: #a8a8a8; }
.today { background: #0f78d0; margin: 0 1px 1px; padding-top: 2px; border: 2px solid #0f78d0; outline: 2px solid #cfe4f5; outline-offset: -4px; }
.today b { font-weight: 600; color: #fff; }
.today i { color: #dff0ff; }
.cal-bot { flex: 1; position: relative; padding: 15px 24px 0; }
.today-t { font-size: 18px; line-height: 24px; color: #111; }
.ev-in { margin-top: 8px; height: 32px; line-height: 30px; border: 1px solid #7d7d7d; padding-left: 8px; font-size: 14px; color: #777; }
.noev { margin-top: 16px; font-size: 15px; line-height: 20px; color: #111; }
.hide { position: absolute; right: 24px; bottom: 14px; display: flex; align-items: center; gap: 5px; font-size: 14px; line-height: 20px; color: #23568c; }
.hide svg { width: 13px; height: 8px; }
```
